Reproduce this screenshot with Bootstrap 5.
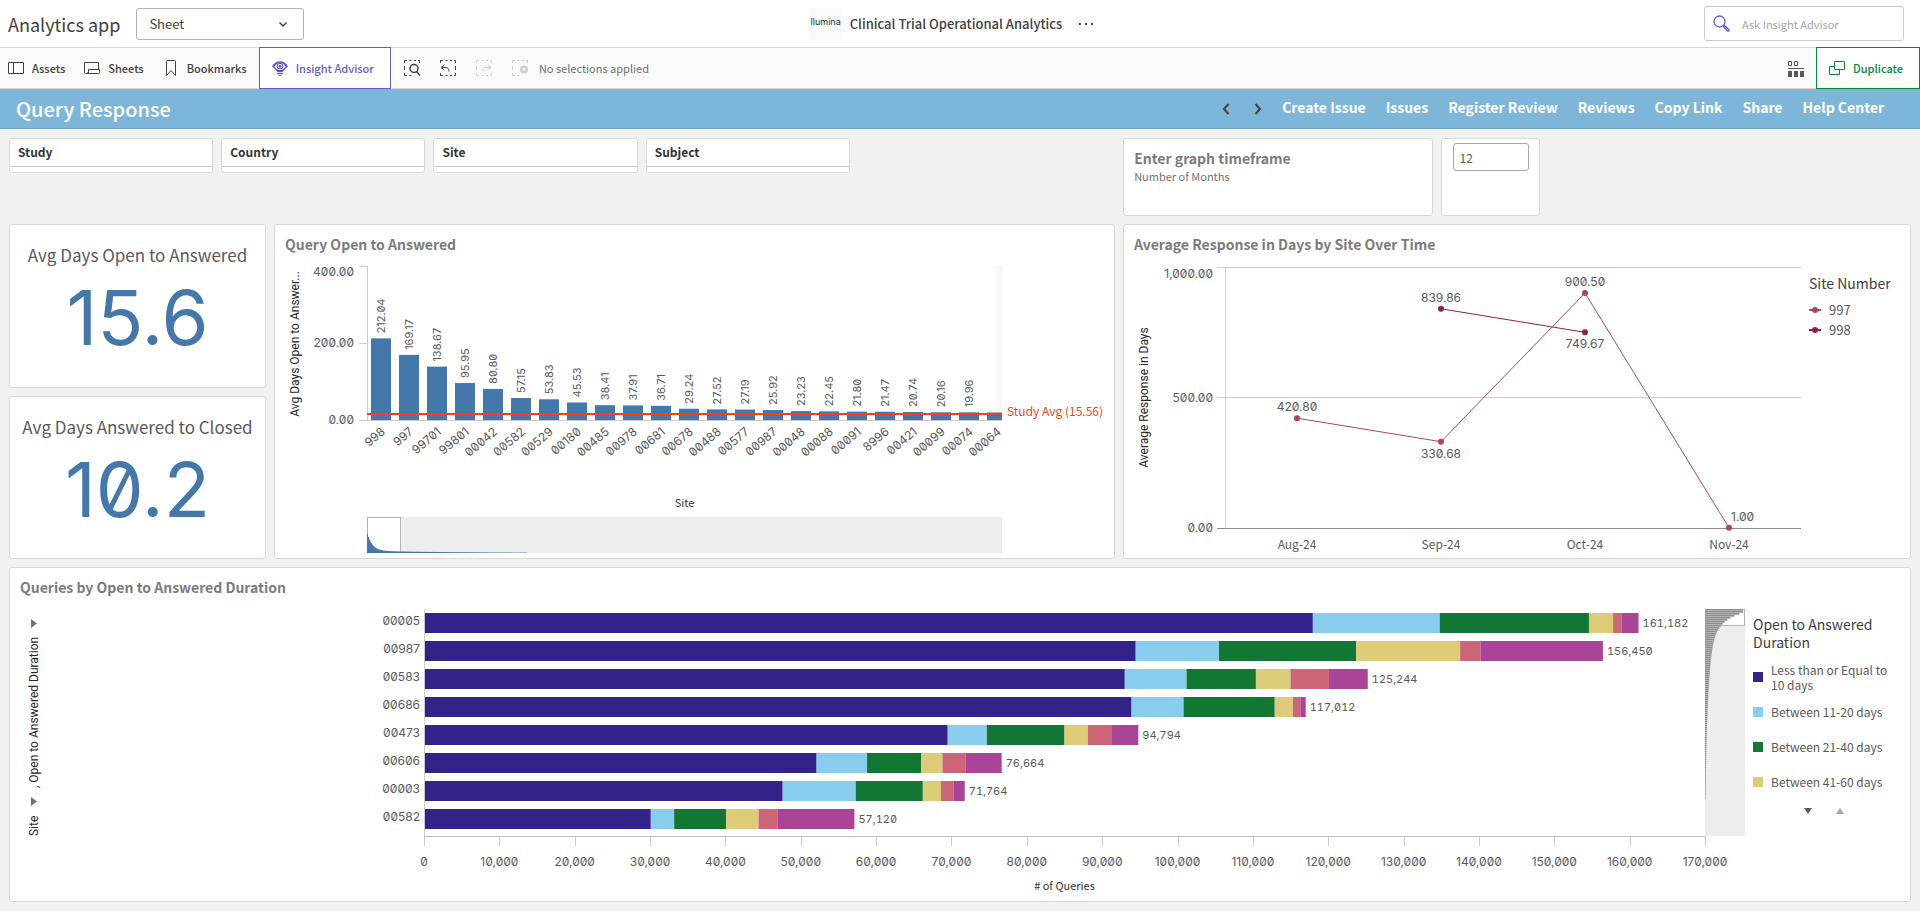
<!DOCTYPE html>
<html lang="en">
<head>
    <meta charset="UTF-8">
    <meta name="viewport" content="width=device-width, initial-scale=1.0">
    <title>Clinical Trial Operational Analytics - Query Response</title>
    <link href="https://cdn.jsdelivr.net/npm/bootstrap@5.3.0/dist/css/bootstrap.min.css" rel="stylesheet">
    <style>
        body {
            font-family: "Noto Sans CJK SC", "Noto Sans", sans-serif;
            font-size: 12px;
            line-height: 16px;
            color: #404040;
            background-color: #f1f1f1;
        }
        a { color: inherit; text-decoration: none; }
        svg { flex-shrink: 0; }

        /* Top bar */
        .topbar {
            display: grid;
            grid-template-columns: 1fr auto 1fr;
            height: 48px;
            background-color: #fff;
            border-bottom: 1px solid #d9d9d9;
        }
        .app-name { font-size: 18px; line-height: 24px; }
        .sheet-select {
            width: 168px;
            height: 32px;
            padding: 0 12px;
            font-size: 13px;
            color: #404040;
            border: 1px solid #b3b3b3;
            border-radius: 3px;
            background-image: url("data:image/svg+xml,%3Csvg xmlns='http://www.w3.org/2000/svg' viewBox='0 0 16 16'%3E%3Cpath d='M4.500 6.500 8 10 11.500 6.500' fill='none' stroke='%23404040' stroke-width='1.500'/%3E%3C/svg%3E");
            background-size: 16px 16px;
        }
        .app-logo {
            width: 32px;
            height: 32px;
            padding-top: 5px;
            border-radius: 3px;
            background-color: #fafafa;
            color: #0b3045;
            font-family: Inter, sans-serif;
            font-size: 9px;
            line-height: 18px;
        }
        .app-title { font-size: 13px; font-weight: 500; }
        .ask-box {
            width: 200px;
            height: 35px;
            border: 1px solid #ccc;
            border-radius: 3px;
        }
        .ask-box input { font-size: 11px; outline: 0; }
        .ask-box input::placeholder { color: #a6a6a6; }

        /* Toolbar */
        .toolbar {
            height: 41px;
            background-color: #fafafa;
            border-bottom: 1px solid #d9d9d9;
        }
        .tool-group { display: flex; gap: 19px; padding: 0 12px 0 8px; }
        .selection-group { display: flex; gap: 18px; padding-left: 12px; }
        .tool {
            display: flex;
            align-items: center;
            gap: 8px;
            padding: 0;
            border: 0;
            background: none;
            color: #404040;
            font-size: 11px;
            font-weight: 500;
        }
        .tool:disabled { color: #ccc; }
        .selection-text { font-size: 11px; color: #6e6e6e; margin-left: -8px; }
        .tool-boxed {
            height: 42px;
            margin-top: -1px;
            border: 1px solid currentColor;
            background-color: #fff;
        }
        .tool-advisor { color: #655dc6; padding: 0 16px 0 12px; }
        .tool-duplicate { color: #00873d; padding: 0 16px 0 12px; }

        /* Sheet title */
        .sheet-head {
            height: 40px;
            background-color: #7eb6da;
            border-bottom: 1px solid #6ea6ca;
            color: #fff;
        }
        .sheet-head h1 { font-size: 20px; line-height: 24px; font-weight: 500; }
        .sheet-links { font-size: 14px; line-height: 20px; font-weight: 700; }

        /* Dashboard */
        .board { padding: 9px; gap: 8px; }
        .row-filters {
            display: grid;
            grid-template-columns: 204fr 204fr 204fr 204fr 257fr 310fr 98fr 363fr;
            gap: 8px;
        }
        .row-charts {
            display: grid;
            grid-template-columns: 257fr 841fr 788fr;
            gap: 8px;
        }
        .row-charts, .row-stack {
            flex: 1 1 0;
            min-height: 335px;
        }
        .tile {
            background-color: #fff;
            border: 1px solid #d9d9d9;
            border-radius: 3px;
            min-width: 0;
        }
        .tile-title {
            font-size: 14px;
            line-height: 20px;
            font-weight: 700;
            color: #7b7b7b;
            margin: 0;
        }
        .chart-title { padding: 9px 10px 0; }
        .filter-tile { height: 35px; }
        .filter-tile h2 {
            height: 28px;
            margin: 0;
            padding: 0 8px;
            font-size: 12px;
            line-height: 26px;
            font-weight: 700;
            color: #333;
            border-bottom: 1px solid #ccc;
        }
        .input-tile { height: 78px; }
        .input-tile label { padding: 9px 10px; }
        .months-label { font-size: 11px; line-height: 16px; color: #737373; }
        .months-input {
            width: 76px;
            height: 28px;
            padding: 0 6px;
            font-size: 12px;
            color: #595959;
            border: 1px solid #a6a6a6;
            border-radius: 3px;
        }
        .kpi-title { padding-top: 18px; font-size: 17px; line-height: 24px; color: #595959; }
        .kpi-value {
            padding-top: 10px;
            font-family: Inter, sans-serif;
            font-feature-settings: "zero";
            font-size: 76px;
            line-height: 80px;
            color: #4477aa;
        }

        /* Charts */
        .chart { flex: 1 1 0; min-height: 0; min-width: 0; }
        .chart svg { display: block; width: 100%; height: 100%; }
        .chart text { font-size: 12px; fill: #595959; }
        .chart text.num { font-family: Inter, sans-serif; font-feature-settings: "zero"; }
        .chart text.val { font-size: 11px; }
        .chart text.total { font-feature-settings: "zero", "tnum"; }
        .chart text.axis-title { font-size: 11px; fill: #333; }
        .chart text.side-title { font-family: Roboto, sans-serif; font-size: 12px; fill: #262626; }
        .chart text.ref { fill: #f93f17; }
        .legend { color: #595959; }
        .legend-line { width: 109px; padding: 20px 0 0 8px; }
        .legend-stack { width: 157px; padding-top: 18px; }
        .legend-title { margin-bottom: 8px; font-size: 14px; line-height: 18px; color: #404040; }
        .legend-item { display: flex; align-items: center; gap: 8px; line-height: 15px; }
        .legend-line .legend-item { font-size: 13px; line-height: 20px; }
        .legend-stack .legend-item { min-height: 35px; }
        .legend-scroll { display: flex; justify-content: center; gap: 24px; padding: 8px 16px 0 0; }
        .swatch { width: 10px; height: 10px; flex-shrink: 0; }
        .swatch-1 { background-color: #332288; }
        .swatch-2 { background-color: #88ccee; }
        .swatch-3 { background-color: #117733; }
        .swatch-4 { background-color: #ddcc77; }
    </style>
</head>
<body class="d-flex flex-column min-vh-100">

    <!-- Top bar -->
    <header class="topbar align-items-center">
        <div class="d-flex align-items-center gap-3 ps-2">
            <span class="app-name">Analytics app</span>
            <select class="form-select sheet-select" aria-label="View">
                <option selected>Sheet</option>
            </select>
        </div>
        <div class="d-flex align-items-center gap-2 pe-3">
            <span class="app-logo text-center overflow-hidden">llumina</span>
            <span class="app-title">Clinical Trial Operational Analytics</span>
            <button class="tool ms-2" type="button" aria-label="More">
                <svg width="16" height="16" viewBox="0 0 16 16" fill="#404040"><path d="M1 7h2v2H1zM7 7h2v2H7zM13 7h2v2h-2z"/></svg>
            </button>
        </div>
        <div class="d-flex justify-content-end pe-3">
            <label class="ask-box d-flex align-items-center gap-2 px-2">
                <svg class="me-1" width="17" height="17" viewBox="0 0 17 17" fill="none" stroke="#655dc6" stroke-width="1.300"><circle cx="6.500" cy="6.500" r="5.500"/><path d="M10.500 11.500l1-1 4.500 4.200c.6.600-.7 1.900-1.300 1.300z"/></svg>
                <input class="border-0 p-0 w-100" type="text" placeholder="Ask Insight Advisor" aria-label="Ask Insight Advisor">
            </label>
        </div>
    </header>

    <!-- Toolbar -->
    <div class="toolbar d-flex">
        <div class="tool-group">
            <button class="tool" type="button">
                <svg width="16" height="16" viewBox="0 0 16 16" fill="none" stroke="currentColor"><path d="M.5 2.500h15v11H.5zM5.500 2.500v11"/></svg>Assets
            </button>
            <button class="tool" type="button">
                <svg width="16" height="16" viewBox="0 0 16 16" fill="none" stroke="currentColor"><path d="M4.500 13.500h-3a1 1 0 0 1-1-1v-10h14v7M4.500 13.500v-4h11v3a1 1 0 0 1-1 1zM4.500 13.500a1 1 0 0 1-1-1"/></svg>Sheets
            </button>
            <button class="tool" type="button">
                <svg width="16" height="18" viewBox="0 0 16 18" fill="none" stroke="currentColor"><path d="M3.500 16.500v-14a1 1 0 0 1 1-1h7a1 1 0 0 1 1 1v14l-4.500-5z"/></svg>Bookmarks
            </button>
        </div>
        <button class="tool tool-boxed tool-advisor" type="button">
            <svg width="16" height="16" viewBox="0 0 16 16" fill="currentColor"><path d="M0 6.500C3-.5 13-.5 16 6.500 14 8 12 9.500 11 12H5C4 9.500 2 8 0 6.500z"/><path d="M2.500 6.500C5 2 11 2 13.500 6.500 11 11 5 11 2.500 6.500z" fill="#fff"/><circle cx="8" cy="6.300" r="3.300"/><circle cx="8" cy="6.300" r="2.300" fill="#fff"/><circle cx="8" cy="6.300" r="1.500"/><path d="M5 12.700h6v1.200H5zM6.500 14.700h3v1.200h-3z"/></svg>
            Insight Advisor
        </button>
        <div class="selection-group">
            <button class="tool" type="button" aria-label="Smart search">
                <svg width="18" height="18" viewBox="0 0 18 18" fill="none" stroke="currentColor"><path d="M1.500 4V1.500H4M6.500 1.500h2M11 1.500h2M15 1.500h1.500V4M1.500 7v4M1.500 14v2.500H4M6.500 16.500h2"/><circle cx="11" cy="9.500" r="4" stroke-width="1.500"/><path d="M13.500 12.500l3.500 4" stroke-width="1.500"/></svg>
            </button>
            <button class="tool" type="button" aria-label="Step back">
                <svg width="18" height="18" viewBox="0 0 18 18" fill="none" stroke="currentColor"><path d="M1.500 4V1.500H4M6.500 1.500h2M11 1.500h2M15 1.500h1.500V4M16.500 7v4M16.500 14v2.500H15M1.500 14v2.500H4M6.500 16.500h2M11 16.500h2"/><path d="M5.500 6L2 8.500 5.500 11M2.500 8.500H6c3 0 4 1 4 4"/></svg>
            </button>
            <button class="tool" type="button" aria-label="Step forward" disabled>
                <svg width="18" height="18" viewBox="0 0 18 18" fill="none" stroke="currentColor"><path d="M1.500 4V1.500H4M6.500 1.500h2M11 1.500h2M15 1.500h1.500V4M1.500 7v4M16.500 14v2.500H15M1.500 14v2.500H4M6.500 16.500h2M11 16.500h2"/><path d="M12.500 6L16 8.500 12.500 11M15.500 8.500H12c-3 0-4 1-4 4"/></svg>
            </button>
            <button class="tool" type="button" aria-label="Clear all selections" disabled>
                <svg width="18" height="18" viewBox="0 0 18 18" fill="none" stroke="currentColor"><path d="M1.500 4V1.500H4M6.500 1.500h2M11 1.500h2M15 1.500h1.500V4M1.500 7v4M1.500 14v2.500H4M6.500 16.500h2"/><circle cx="13" cy="10.500" r="4" fill="currentColor" stroke="none"/><path d="M11.500 9l3 3M14.500 9l-3 3" stroke="#fff"/></svg>
            </button>
            <span class="selection-text align-self-center">No selections applied</span>
        </div>
        <div class="d-flex ms-auto gap-2">
            <button class="tool me-1" type="button" aria-label="Navigate selections">
                <svg width="16" height="17" viewBox="0 0 16 17" fill="none" stroke="#595959"><path d="M.5 1.500h3v4h-3zM6.500 1.500h3v4h-3zM0 8.500h16"/><path d="M0 11h4v6H0zM6 11h4v6H6zM12 11h4v6h-4z" fill="#595959" stroke="none"/></svg>
            </button>
            <button class="tool tool-boxed tool-duplicate" type="button">
                <svg width="16" height="16" viewBox="0 0 16 16" fill="none" stroke="currentColor"><path d="M5.500 1.500h10v8h-10zM5.500 6.500h-5v8h10v-5"/></svg>
                Duplicate
            </button>
        </div>
    </div>

    <!-- Sheet title -->
    <div class="sheet-head d-flex align-items-center ps-3">
        <h1 class="m-0 me-auto">Query Response</h1>
        <div class="d-flex gap-3 me-3">
            <button class="tool" type="button" aria-label="Previous sheet">
                <svg width="16" height="16" viewBox="0 0 16 16" fill="none" stroke="currentColor" stroke-width="2"><path d="M10.500 3L6 8l4.500 5"/></svg>
            </button>
            <button class="tool" type="button" aria-label="Next sheet">
                <svg width="16" height="16" viewBox="0 0 16 16" fill="none" stroke="currentColor" stroke-width="2"><path d="M5.500 3L10 8l-4.500 5"/></svg>
            </button>
        </div>
        <nav class="sheet-links d-flex gap-3 me-4 pe-2 pb-1">
            <a class="me-1" href="#">Create Issue</a>
            <a class="me-1" href="#">Issues</a>
            <a class="me-1" href="#">Register Review</a>
            <a class="me-1" href="#">Reviews</a>
            <a class="me-1" href="#">Copy Link</a>
            <a class="me-1" href="#">Share</a>
            <a class="me-1" href="#">Help Center</a>
        </nav>
    </div>

    <!-- Dashboard -->
    <main class="board d-flex flex-column flex-grow-1">
        <div class="row-filters">
            <section class="tile filter-tile"><h2>Study</h2></section>
            <section class="tile filter-tile"><h2>Country</h2></section>
            <section class="tile filter-tile"><h2>Site</h2></section>
            <section class="tile filter-tile"><h2>Subject</h2></section>
            <div></div>
            <section class="tile input-tile">
                <label class="d-block" for="months">
                    <span class="tile-title d-block">Enter graph timeframe</span>
                    <span class="months-label d-block">Number of Months</span>
                </label>
            </section>
            <section class="tile input-tile d-flex justify-content-center pt-1">
                <input class="months-input" id="months" type="text" value="12">
            </section>
        </div>

        <div class="row-charts">
            <div class="d-flex flex-column gap-2">
                <section class="tile flex-fill text-center">
                    <div class="kpi-title">Avg Days Open to Answered</div>
                    <div class="kpi-value">15.6</div>
                </section>
                <section class="tile flex-fill text-center">
                    <div class="kpi-title">Avg Days Answered to Closed</div>
                    <div class="kpi-value">10.2</div>
                </section>
            </div>
            <section class="tile d-flex flex-column">
                <h2 class="tile-title chart-title">Query Open to Answered</h2>
                <div class="chart" id="barChart"></div>
            </section>
            <section class="tile d-flex flex-column">
                <h2 class="tile-title chart-title">Average Response in Days by Site Over Time</h2>
                <div class="d-flex flex-grow-1">
                    <div class="chart" id="lineChart"></div>
                    <div class="legend legend-line">
                        <div class="legend-title">Site Number</div>
                        <div class="legend-item"><svg width="12" height="8" viewBox="0 0 12 8" fill="#aa4466"><path d="M0 3h12v2H0z"/><circle cx="6" cy="4" r="3"/></svg>997</div>
                        <div class="legend-item"><svg width="12" height="8" viewBox="0 0 12 8" fill="#882255"><path d="M0 3h12v2H0z"/><circle cx="6" cy="4" r="3"/></svg>998</div>
                    </div>
                </div>
            </section>
        </div>

        <section class="tile row-stack d-flex flex-column">
            <h2 class="tile-title chart-title">Queries by Open to Answered Duration</h2>
            <div class="d-flex flex-grow-1">
                <div class="chart" id="stackChart"></div>
                <div class="legend legend-stack">
                    <div class="legend-title">Open to Answered<br>Duration</div>
                    <div class="legend-item"><span class="swatch swatch-1"></span><span>Less than or Equal to<br>10 days</span></div>
                    <div class="legend-item"><span class="swatch swatch-2"></span>Between 11-20 days</div>
                    <div class="legend-item"><span class="swatch swatch-3"></span>Between 21-40 days</div>
                    <div class="legend-item"><span class="swatch swatch-4"></span>Between 41-60 days</div>
                    <div class="legend-scroll">
                        <button class="tool" type="button" aria-label="Scroll down"><svg width="8" height="8" viewBox="0 0 8 8" fill="#595959"><path d="M0 1h8L4 7z"/></svg></button>
                        <button class="tool" type="button" aria-label="Scroll up"><svg width="8" height="8" viewBox="0 0 8 8" fill="#a6a6a6"><path d="M0 7h8L4 1z"/></svg></button>
                    </div>
                </div>
            </div>
        </section>
    </main>

    <script src="https://cdn.jsdelivr.net/npm/bootstrap@5.3.0/dist/js/bootstrap.bundle.min.js"></script>
    <script>
        const NS = 'http://www.w3.org/2000/svg';

        const siteAverages = [
            ['998', 212.04], ['997', 169.17], ['99701', 138.67], ['99801', 95.95], ['00042', 80.80],
            ['00582', 57.15], ['00529', 53.83], ['00180', 45.53], ['00485', 38.41], ['00978', 37.91],
            ['00681', 36.71], ['00678', 29.24], ['00488', 27.52], ['00577', 27.19], ['00987', 25.92],
            ['00048', 23.23], ['00088', 22.45], ['00091', 21.80], ['8996', 21.47], ['00421', 20.74],
            ['00099', 20.16], ['00074', 19.96], ['00064', 19.5]
        ];

        const months = ['Aug-24', 'Sep-24', 'Oct-24', 'Nov-24'];
        // month index, value, label side
        const responseLines = [
            { color: '#882255', points: [[1, 839.86, 'above'], [2, 749.67, 'below']] },
            { color: '#aa4466', points: [[0, 420.80, 'above'], [1, 330.68, 'below'], [2, 900.50, 'above'], [3, 1.00, 'right']] }
        ];

        // Running totals per duration bucket
        const stackColors = ['#332288', '#88ccee', '#117733', '#ddcc77', '#cc6677', '#aa4499'];
        const stacks = [
            ['00005', [117960, 134800, 154600, 157800, 158900, 161182]],
            ['00987', [94450, 105500, 123700, 137500, 140200, 156450]],
            ['00583', [93000, 101200, 110400, 115000, 120100, 125244]],
            ['00686', [93900, 100800, 112900, 115300, 116300, 117012]],
            ['00473', [69500, 74700, 85000, 88100, 91200, 94794]],
            ['00606', [52100, 58800, 66000, 68800, 71900, 76664]],
            ['00003', [47600, 57300, 66200, 68600, 70300, 71764]],
            ['00582', [30100, 33200, 40100, 44400, 46900, 57120]]
        ];

        function add(svg, tag, attrs, text) {
            const el = document.createElementNS(NS, tag);
            for (const key in attrs) el.setAttribute(key, attrs[key]);
            if (text !== undefined) el.textContent = text;
            svg.appendChild(el);
            return el;
        }

        function line(svg, x1, y1, x2, y2, color) {
            add(svg, 'path', { d: `M${x1} ${y1}L${x2} ${y2}`, stroke: color, fill: 'none', 'shape-rendering': 'crispEdges' });
        }

        function label(svg, x, y, text, cls, anchor, angle) {
            const attrs = { x: x, y: y, class: cls || '', 'text-anchor': anchor || 'middle' };
            if (angle) attrs.transform = `rotate(${angle} ${x} ${y})`;
            add(svg, 'text', attrs, text);
        }

        function createSvg(id) {
            const box = document.getElementById(id);
            box.innerHTML = '';
            const svg = document.createElementNS(NS, 'svg');
            const w = box.clientWidth, h = box.clientHeight;
            box.appendChild(svg);
            return { svg, w, h };
        }

        function drawBarChart() {
            const { svg, w, h } = createSvg('barChart');
            const left = 92, right = w - 112, top = 12, bottom = h - 138;
            const y = v => bottom - v * (bottom - top) / 400;
            const step = 28;

            const defs = add(svg, 'defs', {});
            const fade = add(defs, 'linearGradient', { id: 'fade' });
            add(fade, 'stop', { offset: 0, 'stop-color': '#fff' });
            add(fade, 'stop', { offset: 1, 'stop-color': '#f5f5f5' });
            add(svg, 'rect', { x: right - 12, y: top, width: 12, height: bottom - top, fill: 'url(#fade)' });

            line(svg, left, top, left, bottom, '#ccc');
            line(svg, left, bottom, right, bottom, '#ccc');
            [400, 200, 0].forEach(v => {
                line(svg, left - 8, y(v), left, y(v), '#ccc');
                label(svg, left - 13, v === 400 ? top + 10 : y(v) + 4, v.toFixed(2), 'num', 'end');
            });

            siteAverages.forEach((site, i) => {
                const x = left + 4 + i * step;
                const barWidth = Math.min(20, right - x);
                if (barWidth <= 0) return;
                add(svg, 'rect', { x: x, y: y(site[1]), width: barWidth, height: bottom - y(site[1]), fill: '#4477aa' });
                if (barWidth === 20) {
                    label(svg, x + 14, y(site[1]) - 5, site[1].toFixed(2), 'num val', 'start', -90);
                }
                label(svg, x + 15, bottom + 13, site[0], 'num', 'end', -40);
            });

            add(svg, 'rect', { x: left, y: y(15.56) - 1, width: right - left, height: 2, fill: '#f93f17' });
            label(svg, right + 5, y(15.56) + 2, 'Study Avg (15.56)', 'ref', 'start');
            label(svg, 24, (top + bottom) / 2 + 1, 'Avg Days Open to Answer...', 'side-title', 'middle', -90);
            label(svg, (left + right) / 2, bottom + 87, 'Site', 'axis-title');

            // Scroll overview
            const oy = h - 41, oh = 36;
            add(svg, 'rect', { x: left, y: oy, width: right - left, height: oh, fill: '#ededed' });
            add(svg, 'rect', { x: left + 0.5, y: oy + 0.5, width: 33, height: oh - 1, fill: '#fff', stroke: '#b3b3b3' });
            for (let i = 0; i < 160; i++) {
                const bh = 17 * Math.exp(-i / 5) + 2.2 * Math.exp(-i / 90);
                add(svg, 'rect', { x: left + i, y: oy + oh - bh, width: 1, height: bh, fill: '#4477aa' });
            }
        }

        function drawLineChart() {
            const { svg, w, h } = createSvg('lineChart');
            const left = 101, right = w, top = 13, bottom = h - 30;
            const y = v => bottom - v * (bottom - top) / 1000;
            const band = (right - left) / months.length;
            const x = i => left + band * (i + 0.5);

            [1000, 500, 0].forEach(v => {
                line(svg, left - 8, y(v), right, y(v), v ? '#ccc' : '#8c8c8c');
                const text = v.toLocaleString('en-US', { minimumFractionDigits: 2 });
                label(svg, left - 12, v === 1000 ? top + 11 : y(v) + 4, text, 'num', 'end');
            });
            line(svg, left, top, left, bottom, '#ccc');
            months.forEach((m, i) => label(svg, x(i), bottom + 21, m));

            responseLines.forEach(series => {
                const d = series.points.map(p => `${x(p[0])},${y(p[1])}`).join(' ');
                add(svg, 'polyline', { points: d, fill: 'none', stroke: series.color });
                series.points.forEach(p => {
                    const px = x(p[0]), py = y(p[1]);
                    add(svg, 'circle', { cx: px, cy: py, r: 3, fill: series.color });
                    if (p[2] === 'right') label(svg, px + 2, py - 7, p[1].toFixed(2), 'num', 'start');
                    else label(svg, px, p[2] === 'above' ? py - 7 : py + 16, p[1].toFixed(2), 'num');
                });
            });
            label(svg, 24, (top + bottom) / 2, 'Average Response in Days', 'side-title', 'middle', -90);
        }

        function drawStackChart() {
            const { svg, w, h } = createSvg('stackChart');
            const left = 414, right = w - 48, top = 12, bottom = h - 65;
            const x = v => left + v * (right - left) / 170000;
            const step = 28;

            for (let v = 0; v <= 170000; v += 10000) {
                line(svg, Math.round(x(v)), bottom, Math.round(x(v)), bottom + 10, '#ccc');
                label(svg, x(v), bottom + 30, v.toLocaleString('en-US'), 'num');
            }
            stacks.forEach((row, i) => {
                const y = top + 4 + i * step;
                let start = 0;
                row[1].forEach((end, k) => {
                    add(svg, 'rect', { x: x(start), y: y, width: x(end) - x(start), height: 20, fill: stackColors[k] });
                    start = end;
                });
                label(svg, left - 4, y + 12, row[0], 'num', 'end');
                label(svg, x(start) + 4, y + 14, start.toLocaleString('en-US'), 'num val total', 'start');
            });
            line(svg, left, top, left, bottom, '#ccc');
            line(svg, left, bottom, right, bottom, '#bfbfbf');
            label(svg, (left + right) / 2, bottom + 54, '# of Queries', 'axis-title');

            label(svg, 28, bottom, 'Site', 'side-title', 'start', -90);
            add(svg, 'path', { d: `M21 ${bottom - 39}v9l6 -4.5z`, fill: '#737373' });
            label(svg, 28, bottom - 48, ', Open to Answered Duration', 'side-title', 'start', -90);
            add(svg, 'path', { d: `M21 ${bottom - 217}v9l6 -4.5z`, fill: '#737373' });

            // Scroll overview
            add(svg, 'rect', { x: right, y: top, width: 40, height: bottom - top, fill: '#ededed' });
            add(svg, 'rect', { x: right + 0.5, y: top + 0.5, width: 39, height: 16, fill: '#fff', stroke: '#b3b3b3' });
            for (let i = 0; i < 190; i += 2) {
                const bw = i < 4 ? 38 : 22 * Math.exp(-(i - 4) / 9) + 13 * Math.exp(-i / 62);
                add(svg, 'rect', { x: right, y: top + i, width: bw, height: 1, fill: '#8c8c8c' });
                add(svg, 'rect', { x: right, y: top + i + 1, width: bw, height: 1, fill: '#b3b3b3' });
            }
        }

        function drawCharts() {
            drawBarChart();
            drawLineChart();
            drawStackChart();
        }

        window.addEventListener('resize', drawCharts);
        drawCharts();
    </script>
</body>
</html>
